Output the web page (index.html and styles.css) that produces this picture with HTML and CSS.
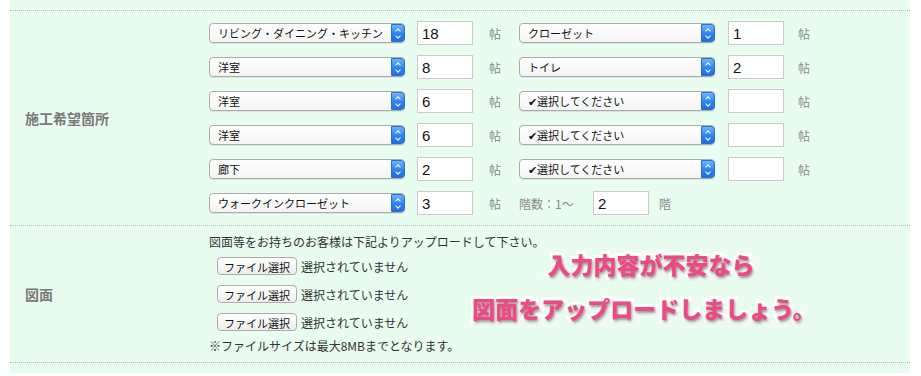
FILE: index.html
```html
<!DOCTYPE html>
<html lang="ja">
<head>
  <meta charset="UTF-8" />
  <title>施工希望箇所</title>
  <link rel="stylesheet" href="styles.css">
</head>
<body>
  <div class="form-panel">
    <div class="top-gap"></div>

    <!-- 施工希望箇所 -->
    <div class="form-row">
      <div class="form-label">施工希望箇所</div>
      <div class="form-field places">
        <div class="place-row">
          <div class="select"><select><option>リビング・ダイニング・キッチン</option></select><span class="arrow"></span></div>
          <input class="num" type="text" value="18" />
          <span class="unit">帖</span>
          <div class="select"><select><option>クローゼット</option></select><span class="arrow"></span></div>
          <input class="num num2" type="text" value="1" />
          <span class="unit unit2">帖</span>
        </div>
        <div class="place-row">
          <div class="select"><select><option>洋室</option></select><span class="arrow"></span></div>
          <input class="num" type="text" value="8" />
          <span class="unit">帖</span>
          <div class="select"><select><option>トイレ</option></select><span class="arrow"></span></div>
          <input class="num num2" type="text" value="2" />
          <span class="unit unit2">帖</span>
        </div>
        <div class="place-row">
          <div class="select"><select><option>洋室</option></select><span class="arrow"></span></div>
          <input class="num" type="text" value="6" />
          <span class="unit">帖</span>
          <div class="select"><select><option>✔選択してください</option></select><span class="arrow"></span></div>
          <input class="num num2" type="text" value="" />
          <span class="unit unit2">帖</span>
        </div>
        <div class="place-row">
          <div class="select"><select><option>洋室</option></select><span class="arrow"></span></div>
          <input class="num" type="text" value="6" />
          <span class="unit">帖</span>
          <div class="select"><select><option>✔選択してください</option></select><span class="arrow"></span></div>
          <input class="num num2" type="text" value="" />
          <span class="unit unit2">帖</span>
        </div>
        <div class="place-row">
          <div class="select"><select><option>廊下</option></select><span class="arrow"></span></div>
          <input class="num" type="text" value="2" />
          <span class="unit">帖</span>
          <div class="select"><select><option>✔選択してください</option></select><span class="arrow"></span></div>
          <input class="num num2" type="text" value="" />
          <span class="unit unit2">帖</span>
        </div>
        <div class="place-row">
          <div class="select"><select><option>ウォークインクローゼット</option></select><span class="arrow"></span></div>
          <input class="num" type="text" value="3" />
          <span class="unit">帖</span>
          <span class="floor-label">階数：1～</span>
          <input class="num floor" type="text" value="2" />
          <span class="unit floor-unit">階</span>
        </div>
      </div>
    </div>

    <!-- 図面 -->
    <div class="form-row">
      <div class="form-label">図面</div>
      <div class="form-field files">
        <p class="note">図面等をお持ちのお客様は下記よりアップロードして下さい。</p>
        <div class="file-row"><span class="file-btn">ファイル選択</span>選択されていません</div>
        <div class="file-row"><span class="file-btn">ファイル選択</span>選択されていません</div>
        <div class="file-row"><span class="file-btn">ファイル選択</span>選択されていません</div>
        <p class="note">※ファイルサイズは最大8MBまでとなります。</p>

        <div class="callout">
          <span>入力内容が不安なら</span>
          <span>図面をアップロードしましょう。</span>
        </div>
      </div>
    </div>

    <div class="bottom-gap"></div>
  </div>
</body>
</html>
```

FILE: styles.css
```css
body {
  margin: 0;
  background: #fff;
  color: #333;
  font-family: "Liberation Sans", "Noto Sans CJK JP", sans-serif;
}

.form-panel {
  width: 900px;
  margin: 0 10px;
  background: #e8fcf0;
}

.top-gap {
  height: 10px;
  border-bottom: 1px dotted #b4bcb7;
}

.bottom-gap {
  height: 10px;
}

.form-row {
  display: flex;
  border-bottom: 1px dotted #b4bcb7;
}

.form-label {
  width: 184px;
  padding-left: 15px;
  display: flex;
  align-items: center;
  font-size: 14px;
  font-weight: bold;
  color: #7a7a7a;
}

.form-field {
  flex: 1;
  position: relative;
}

/* 施工希望箇所 */
.places {
  padding: 10px 0;
  display: flex;
  flex-direction: column;
  gap: 10px;
}

.place-row {
  display: flex;
  align-items: center;
  height: 24px;
}

.select {
  position: relative;
  width: 196px;
  height: 20px;
}

.select select {
  appearance: none;
  -webkit-appearance: none;
  width: 100%;
  height: 20px;
  margin: 0;
  padding: 0 0 0 8px;
  border: 1px solid #a9aca9;
  border-radius: 4px;
  background: linear-gradient(#fff, #f4f4f4);
  font-family: "Noto Sans CJK JP", sans-serif;
  font-size: 11px;
  color: #111;
  box-shadow: 0 1px 0 rgba(0, 0, 0, 0.08);
}

.select .arrow {
  position: absolute;
  right: 0;
  top: 1px;
  width: 14px;
  height: 18px;
  border-radius: 0 4px 4px 0;
  background: linear-gradient(#6fb3ff, #2c83f3 55%, #1e6fe6);
  border: 1px solid #2a6fd0;
  box-sizing: border-box;
}

.select .arrow::before,
.select .arrow::after {
  content: "";
  position: absolute;
  left: 4px;
  width: 3px;
  height: 3px;
  border-left: 1px solid #fff;
  border-top: 1px solid #fff;
}

.select .arrow::before {
  top: 4px;
  transform: rotate(45deg);
}

.select .arrow::after {
  top: 9px;
  transform: rotate(-135deg);
}

.num {
  width: 56px;
  height: 24px;
  box-sizing: border-box;
  margin: 0 0 0 12px;
  padding: 0 4px;
  border: 1px solid #c8ccc9;
  background: #fff;
  font-family: "Liberation Sans", sans-serif;
  font-size: 15px;
  color: #111;
}

.unit {
  width: 30px;
  margin-left: 16px;
  font-family: "Noto Sans CJK JP", sans-serif;
  font-size: 12px;
  color: #8a8a8a;
}

.num2 {
  margin-left: 13px;
}

.unit2 {
  margin-left: 14px;
}

.floor-label {
  width: 74px;
  font-family: "Noto Sans CJK JP", sans-serif;
  font-size: 12px;
  color: #8a8a8a;
}

.floor {
  margin-left: 0;
}

.floor-unit {
  margin-left: 10px;
}

/* 図面 */
.files {
  padding: 6px 0 6px;
  font-family: "Noto Sans CJK JP", sans-serif;
  font-size: 12px;
  color: #333;
}

.note {
  margin: 0;
  line-height: 20px;
}

.file-row {
  display: flex;
  align-items: center;
  height: 28px;
  padding-left: 8px;
}

.file-btn {
  display: inline-block;
  width: 80px;
  height: 18px;
  line-height: 18px;
  box-sizing: border-box;
  margin-right: 4px;
  border: 1px solid #a9aca9;
  border-radius: 4px;
  background: linear-gradient(#fff, #eee);
  text-align: center;
  font-size: 11px;
  color: #111;
}

.callout {
  position: absolute;
  left: 262px;
  top: 25px;
  width: 346px;
  display: flex;
  flex-direction: column;
  align-items: center;
  gap: 17px;
  font-family: "Noto Sans CJK JP Black", "Noto Sans CJK JP", sans-serif;
  font-size: 23px;
  font-weight: 900;
  line-height: 27px;
  color: #ec4a85;
  -webkit-text-stroke: 6px #fff;
  paint-order: stroke fill;
  text-shadow: 1px 2px 3px rgba(0, 0, 0, 0.45);
}

.callout span:first-child {
  margin-left: 14px;
}
```
